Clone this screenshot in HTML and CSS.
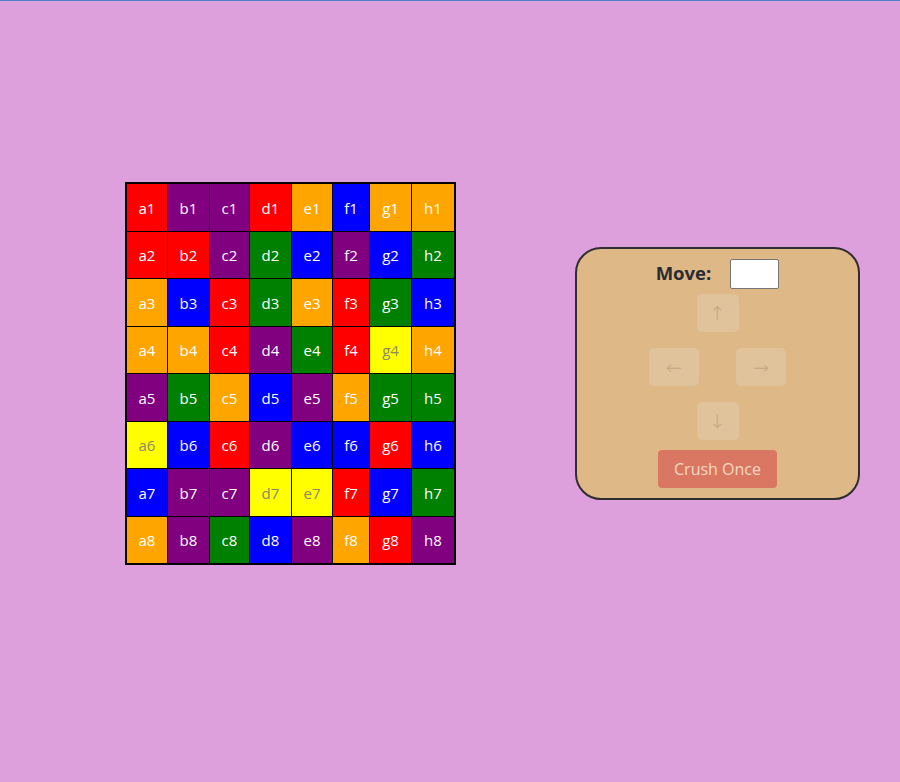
FILE: index.html
```html
<!DOCTYPE html>
<html lang="en">
<head>
<meta charset="utf-8">
<title>Crush</title>
<link rel="stylesheet" href="styles.css">
</head>
<body>
<main class="stage">
  <div class="board">
    <div class="cell red">a1</div><div class="cell purple">b1</div><div class="cell purple">c1</div><div class="cell red">d1</div><div class="cell orange">e1</div><div class="cell blue">f1</div><div class="cell orange">g1</div><div class="cell orange">h1</div>
    <div class="cell red">a2</div><div class="cell red">b2</div><div class="cell purple">c2</div><div class="cell green">d2</div><div class="cell blue">e2</div><div class="cell purple">f2</div><div class="cell blue">g2</div><div class="cell green">h2</div>
    <div class="cell orange">a3</div><div class="cell blue">b3</div><div class="cell red">c3</div><div class="cell green">d3</div><div class="cell orange">e3</div><div class="cell red">f3</div><div class="cell green">g3</div><div class="cell blue">h3</div>
    <div class="cell orange">a4</div><div class="cell orange">b4</div><div class="cell red">c4</div><div class="cell purple">d4</div><div class="cell green">e4</div><div class="cell red">f4</div><div class="cell yellow">g4</div><div class="cell orange">h4</div>
    <div class="cell purple">a5</div><div class="cell green">b5</div><div class="cell orange">c5</div><div class="cell blue">d5</div><div class="cell purple">e5</div><div class="cell orange">f5</div><div class="cell green">g5</div><div class="cell green">h5</div>
    <div class="cell yellow">a6</div><div class="cell blue">b6</div><div class="cell red">c6</div><div class="cell purple">d6</div><div class="cell blue">e6</div><div class="cell blue">f6</div><div class="cell red">g6</div><div class="cell blue">h6</div>
    <div class="cell blue">a7</div><div class="cell purple">b7</div><div class="cell purple">c7</div><div class="cell yellow">d7</div><div class="cell yellow">e7</div><div class="cell red">f7</div><div class="cell blue">g7</div><div class="cell green">h7</div>
    <div class="cell orange">a8</div><div class="cell purple">b8</div><div class="cell green">c8</div><div class="cell blue">d8</div><div class="cell purple">e8</div><div class="cell orange">f8</div><div class="cell red">g8</div><div class="cell purple">h8</div>
  </div>

  <div class="panel">
    <div class="move-row">
      <label class="move-label" for="move">Move:</label>
      <input class="move-input" id="move" type="text">
    </div>
    <div class="pad">
      <button class="arrow arrow-v" disabled>↑</button>
      <div class="arrow-row">
        <button class="arrow arrow-h" disabled>←</button>
        <button class="arrow arrow-h" disabled>→</button>
      </div>
      <button class="arrow arrow-v" disabled>↓</button>
    </div>
    <button class="crush" disabled>Crush Once</button>
  </div>
</main>
</body>
</html>
```

FILE: styles.css
```css
html, body {
  margin: 0;
  padding: 0;
}

body {
  background: #dda0dd;
  border-top: 1px solid #4a80c8;
  min-height: 781px;
  font-family: "Open Sans", "Noto Sans", sans-serif;
}

.stage {
  display: flex;
  align-items: center;
  padding-top: 181px;
  padding-left: 125px;
  gap: 119px;
}

.board {
  display: grid;
  grid-template-columns: 40px 41px 39px 41px 40px 36px 41px 42px;
  grid-template-rows: 47px 46px 47px 46px 47px 46px 47px 46px;
  gap: 1px;
  background: #000;
  border: 2px solid #000;
}

.cell {
  display: flex;
  align-items: center;
  justify-content: center;
  color: #fff;
  font-size: 15px;
}

.red { background: #ff0000; }
.purple { background: #800080; }
.orange { background: #ffa500; }
.blue { background: #0000ff; }
.green { background: #008000; }
.yellow { background: #ffff00; color: #8a8a6a; }

.panel {
  width: 281px;
  height: 249px;
  box-sizing: content-box;
  background: #deb887;
  border: 2px solid #2e2e30;
  border-radius: 26px;
  display: flex;
  flex-direction: column;
  align-items: center;
  padding: 0;
}

.move-row {
  display: flex;
  align-items: center;
  gap: 19px;
  margin-top: 10px;
  height: 30px;
}

.move-label {
  font-weight: 700;
  font-size: 18.5px;
  color: #2a2c33;
  margin-bottom: 3px;
}

.move-input {
  width: 49px;
  height: 30px;
  box-sizing: border-box;
  border: 1px solid #767676;
  border-radius: 2px;
  background: #fff;
  padding: 0;
  margin: 0;
}

.pad {
  display: flex;
  flex-direction: column;
  align-items: center;
  gap: 16px;
  margin-top: 5px;
}

.arrow-row {
  display: flex;
  gap: 37px;
}

.arrow {
  height: 38px;
  border: none;
  border-radius: 5px;
  background: #e0c29b;
  color: #c4a57e;
  font-family: "DejaVu Sans", sans-serif;
  font-size: 19px;
  font-weight: 300;
  padding: 0;
}

.arrow-v { width: 42px; }
.arrow-h { width: 50px; }

.crush {
  margin-top: 10px;
  width: 119px;
  height: 38px;
  border: none;
  border-radius: 4px;
  background: #da7762;
  color: #f6d8c2;
  font-family: "Open Sans", "Noto Sans", sans-serif;
  font-size: 16px;
  padding: 0;
}
```
